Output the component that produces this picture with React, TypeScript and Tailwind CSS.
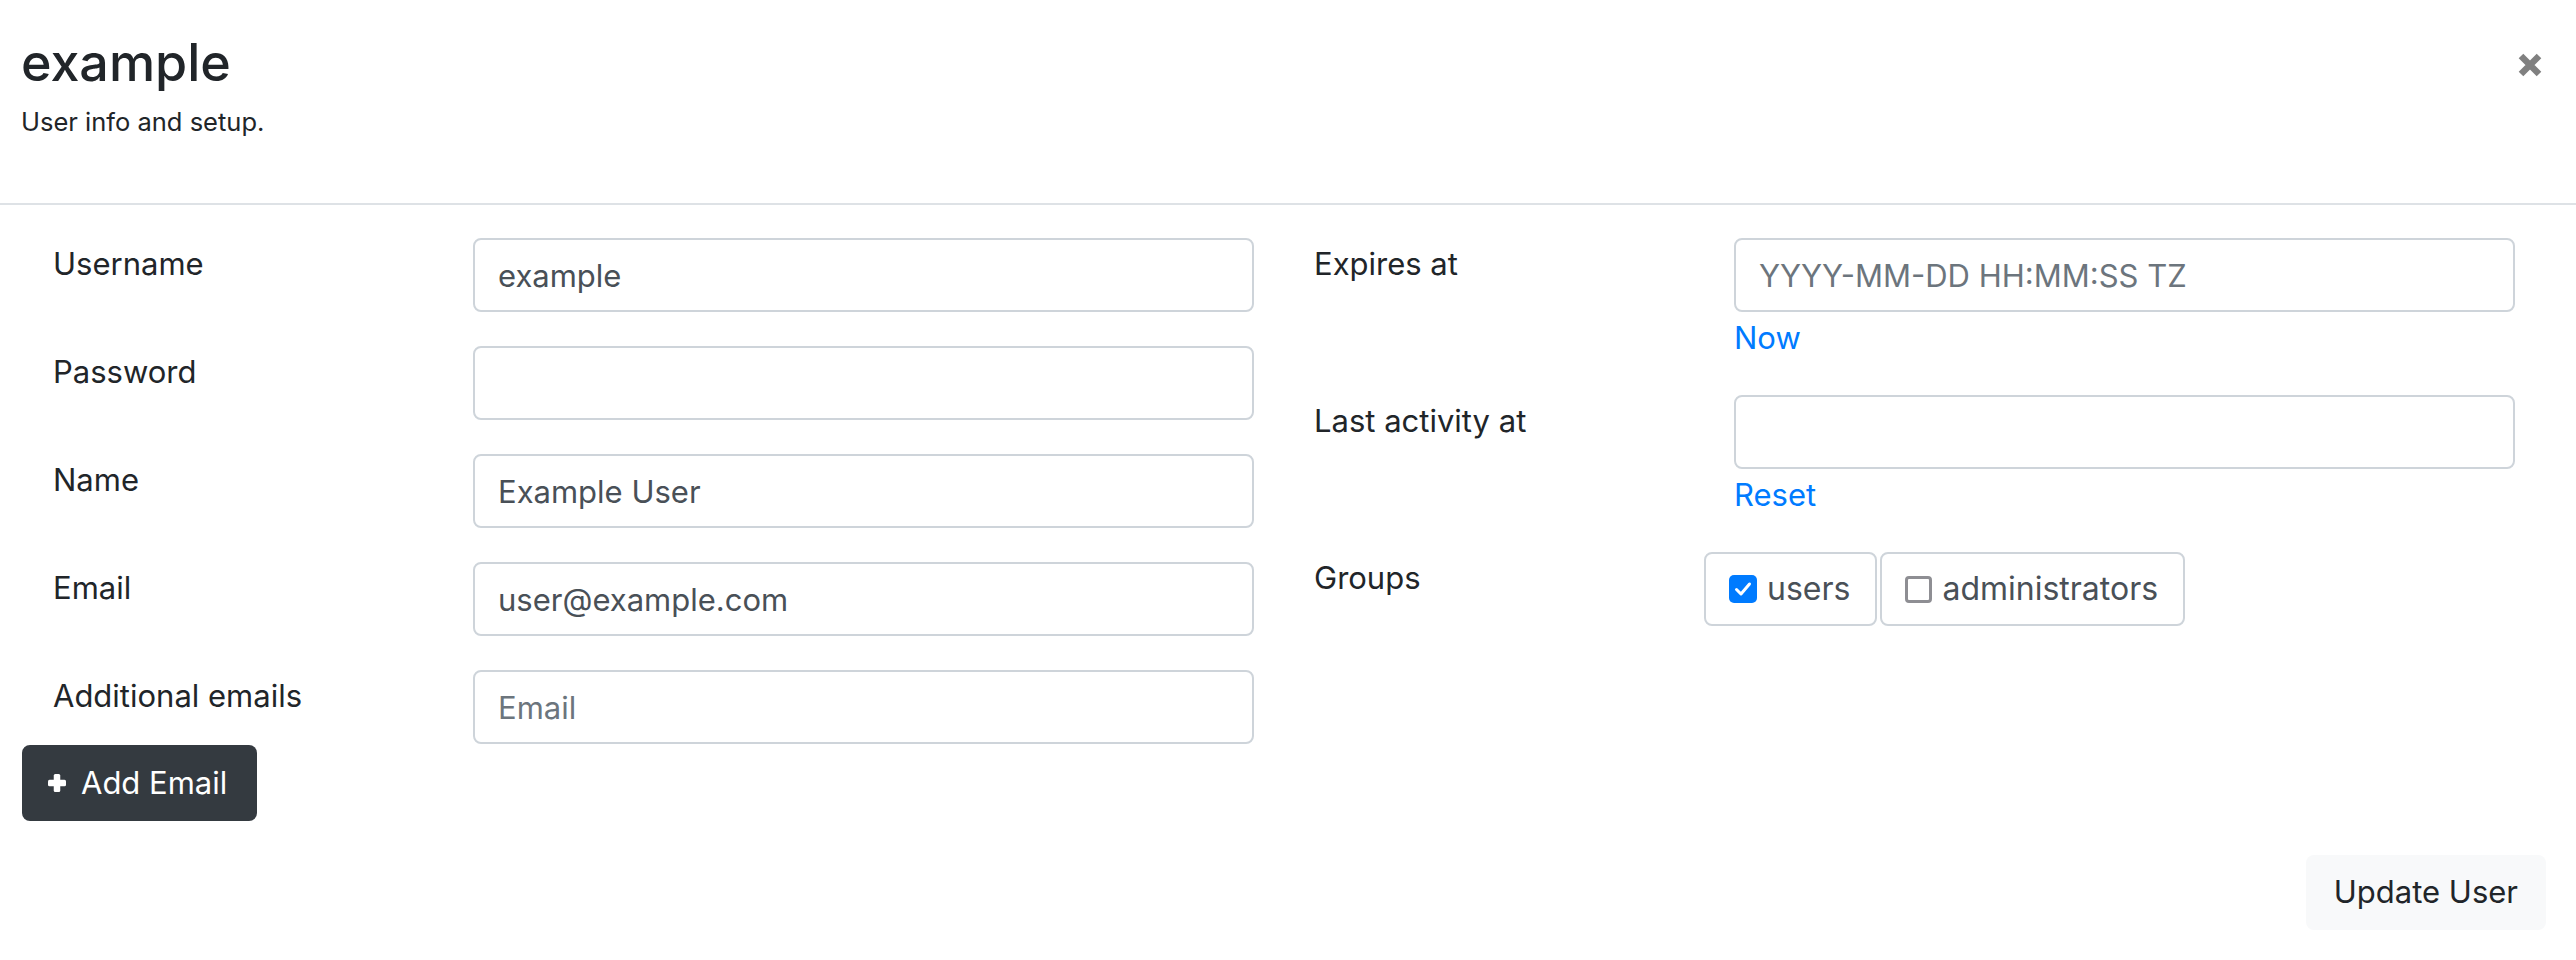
import { ReactNode } from 'react'

const CloseIcon = () => (
  <svg width="26" height="26" viewBox="0 0 26 26" className="block">
    <path d="M4 4 L22 22 M22 4 L4 22" stroke="#808080" strokeWidth="6.5" strokeLinecap="butt" />
  </svg>
)

const PlusIcon = () => (
  <svg width="18" height="18" viewBox="0 0 18 18" className="block shrink-0">
    <rect x="5.75" y="0" width="6.5" height="18" rx="1.5" fill="#fff" />
    <rect x="0" y="5.75" width="18" height="6.5" rx="1.5" fill="#fff" />
  </svg>
)

const TextInput = ({ value, placeholder }: { value?: string; placeholder?: string }) => (
  <input
    readOnly
    value={value ?? ''}
    placeholder={placeholder}
    className="h-[74px] w-full rounded-[8px] border-2 border-[#ced4da] bg-white px-[23px] text-[31px] text-[#495057] outline-none placeholder:text-[#6c757d]"
  />
)

const Row = ({ label, children, last }: { label: string; children: ReactNode; last?: boolean }) => (
  <div className={`flex ${last ? '' : 'mb-[34px]'}`}>
    <label className="w-[420px] shrink-0 pt-[3px] text-[31px] leading-[46px] text-[#212529]">{label}</label>
    <div className="flex-1">{children}</div>
  </div>
)

const GroupCheck = ({ label, checked }: { label: string; checked?: boolean }) => (
  <div className="flex h-[74px] items-center gap-[10px] rounded-[8px] border-2 border-[#ced4da] bg-white pl-[23px] pr-[25px]">
    {checked ? (
      <span className="flex h-[28px] w-[28px] items-center justify-center rounded-[5px] bg-[#007bff]">
        <svg width="20" height="20" viewBox="0 0 20 20">
          <path d="M3.5 10.5 L8 15 L16.5 5" stroke="#fff" strokeWidth="3" fill="none" strokeLinecap="round" strokeLinejoin="round" />
        </svg>
      </span>
    ) : (
      <span className="h-[27px] w-[27px] rounded-[4px] border-[3px] border-[#8e8e93] bg-white" />
    )}
    <span className="text-[32px] leading-[46px] text-[#495057]">{label}</span>
  </div>
)

const App = () => {
  return (
    <div className="min-h-screen w-full bg-white text-[#212529]" style={{ fontFamily: 'Inter, "Noto Sans", sans-serif' }}>
      <header className="flex items-start justify-between border-b-2 border-[#dee2e6] pl-[21px] pr-[33px] pt-[30px] pb-[63px]">
        <div>
          <h3 className="text-[52px] font-medium leading-[66px]">example</h3>
          <p className="mt-[7px] text-[25.5px] leading-[37px]">User info and setup.</p>
        </div>
        <button className="mt-[22px]">
          <CloseIcon />
        </button>
      </header>

      <div className="pt-[33px]">
        <div className="grid grid-cols-[1201px_1201px] gap-x-[60px] pl-[53px]">
          <div>
            <Row label="Username">
              <TextInput value="example" />
            </Row>
            <Row label="Password">
              <TextInput />
            </Row>
            <Row label="Name">
              <TextInput value="Example User" />
            </Row>
            <Row label="Email">
              <TextInput value="user@example.com" />
            </Row>
            <Row label="Additional emails" last>
              <TextInput placeholder="Email" />
            </Row>
            <button className="-ml-[31px] mt-[1px] flex h-[76px] items-center gap-[15px] rounded-[8px] bg-[#343a40] pl-[26px] pr-[30px] text-[31px] text-white">
              <PlusIcon />
              <span>Add Email</span>
            </button>
          </div>

          <div>
            <Row label="Expires at">
              <TextInput placeholder="YYYY-MM-DD HH:MM:SS TZ" />
              <a className="mt-[3px] block text-[31px] leading-[46px] text-[#007bff]">Now</a>
            </Row>
            <Row label="Last activity at">
              <TextInput />
              <a className="mt-[3px] block text-[31px] leading-[46px] text-[#007bff]">Reset</a>
            </Row>
            <Row label="Groups" last>
              <div className="-ml-[30px] flex gap-[3px]">
                <GroupCheck label="users" checked />
                <GroupCheck label="administrators" />
              </div>
            </Row>
          </div>
        </div>

        <div className="flex justify-end pr-[30px] pt-[34px]">
          <button className="h-[75px] rounded-[8px] bg-[#f8f9fa] px-[28px] text-[31px] text-[#212529]">Update User</button>
        </div>
      </div>
    </div>
  )
}

export default App
